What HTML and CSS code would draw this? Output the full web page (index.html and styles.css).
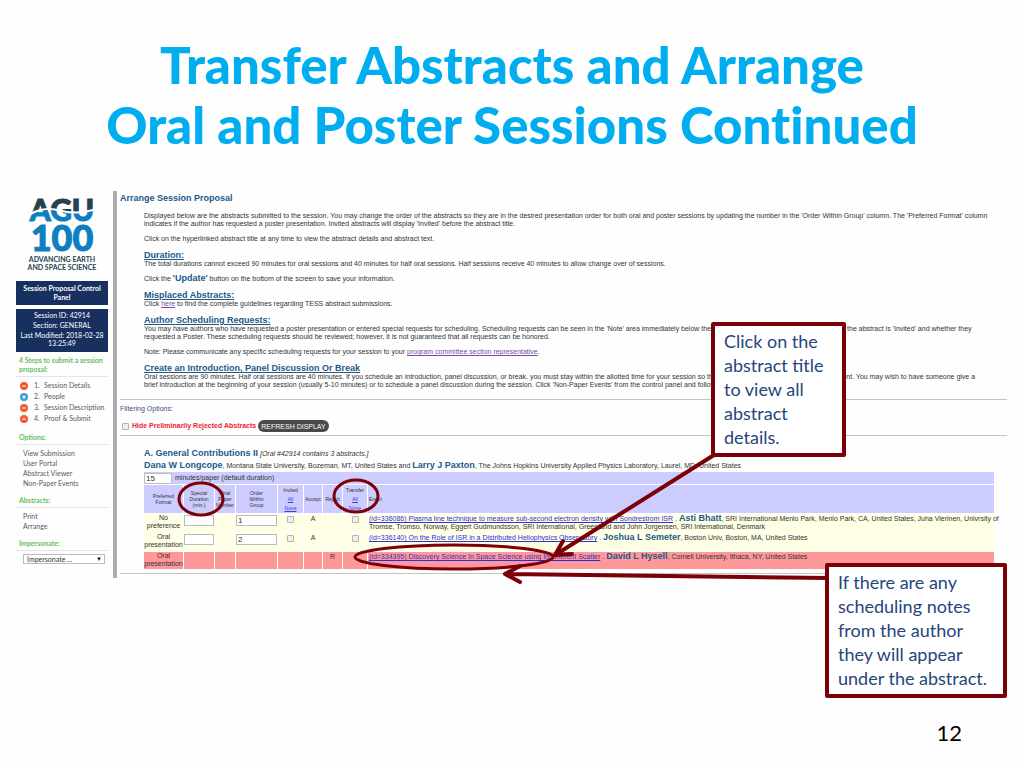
FILE: index.html
```html
<!DOCTYPE html>
<html lang="en">
<head>
    <meta charset="UTF-8" />
    <title>Transfer Abstracts and Arrange Oral and Poster Sessions</title>
    <meta name="viewport" content="width=device-width, initial-scale=1" />
    <link rel="stylesheet" href="styles.css">
</head>
<body>
    <h1>Transfer Abstracts and Arrange<br />Oral and Poster Sessions Continued</h1>

    <div class="app">
        <aside class="sidebar">
            <svg class="logo" viewBox="0 0 92 82" role="img" aria-label="AGU 100">
                <defs>
                    <linearGradient id="agu" gradientUnits="userSpaceOnUse" x1="0" y1="8" x2="0" y2="30">
                        <stop offset="0.55" stop-color="#24424e" />
                        <stop offset="0.55" stop-color="#0d7fc0" />
                    </linearGradient>
                </defs>
                <text class="logo-agu" x="46" y="30" fill="url(#agu)" stroke="url(#agu)">AGU</text>
                <path d="M13 24C24 17 34 17 46 20S68 22 80 18" fill="none" stroke="#fff" stroke-width="2" />
                <text class="logo-100" x="46" y="60">100</text>
                <text class="logo-tag" x="46" y="71">ADVANCING EARTH</text>
                <text class="logo-tag" x="46" y="79">AND SPACE SCIENCE</text>
            </svg>
            <div class="box title">Session Proposal Control Panel</div>
            <div class="box info">
                <div>Session ID: 42914</div>
                <div>Section: GENERAL</div>
                <div class="modified">Last Modified: 2018-02-28 13:25:49</div>
            </div>

            <h3>4 Steps to submit a session proposal:</h3>
            <ol class="steps">
                <li><svg viewBox="0 0 8 8"><circle cx="4" cy="4" r="4" fill="#f0592f" /><path d="M2 4h4" stroke="#fff" /></svg><span>1.</span><a href="#">Session Details</a></li>
                <li><svg viewBox="0 0 8 8"><circle cx="4" cy="4" r="4" fill="#3a9bcb" /><path d="M2 4h4M4 2v4" stroke="#fff" /></svg><span>2.</span><a href="#">People</a></li>
                <li><svg viewBox="0 0 8 8"><circle cx="4" cy="4" r="4" fill="#f0592f" /><path d="M2 4h4" stroke="#fff" /></svg><span>3.</span><a href="#">Session Description</a></li>
                <li><svg viewBox="0 0 8 8"><circle cx="4" cy="4" r="4" fill="#f0592f" /><path d="M2 4h4" stroke="#fff" /></svg><span>4.</span><a href="#">Proof &amp; Submit</a></li>
            </ol>

            <h3>Options:</h3>
            <ul class="links">
                <li><a href="#">View Submission</a></li>
                <li><a href="#">User Portal</a></li>
                <li><a href="#">Abstract Viewer</a></li>
                <li><a href="#">Non-Paper Events</a></li>
            </ul>

            <h3>Abstracts:</h3>
            <ul class="links">
                <li><a href="#">Print</a></li>
                <li><a href="#">Arrange</a></li>
            </ul>

            <h3><label for="impersonate">Impersonate:</label></h3>
            <div class="select">
                <select id="impersonate"><option>Impersonate ...</option></select>
            </div>
        </aside>

        <main>
            <h2>Arrange Session Proposal</h2>
            <div class="intro">
                <p>Displayed below are the abstracts submitted to the session. You may change the order of the abstracts so they are in the desired presentation order for both oral and poster sessions by updating the number in the 'Order Within Group' column. The 'Preferred Format' column<br />indicates if the author has requested a poster presentation. Invited abstracts will display 'Invited' before the abstract title.</p>
                <p>Click on the hyperlinked abstract title at any time to view the abstract details and abstract text.</p>
                <h4>Duration:</h4>
                <p>The total durations cannot exceed 90 minutes for oral sessions and 40 minutes for half oral sessions. Half sessions receive 40 minutes to allow change over of sessions.</p>
                <p>Click the <b>'Update'</b> button on the bottom of the screen to save your information.</p>
                <h4>Misplaced Abstracts:</h4>
                <p>Click <a href="#">here</a> to find the complete guidelines regarding TESS abstract submissions.</p>
                <h4>Author Scheduling Requests:</h4>
                <p>You may have authors who have requested a poster presentation or entered special requests for scheduling. Scheduling requests can be seen in the 'Note' area immediately below the author list. The area will show you whether the abstract is 'Invited' and whether they<br />requested a Poster. These scheduling requests should be reviewed; however, it is not guaranteed that all requests can be honored.</p>
                <p>Note: Please communicate any specific scheduling requests for your session to your <a href="#">program committee section representative</a>.</p>
                <h4>Create an Introduction, Panel Discussion Or Break</h4>
                <p>Oral sessions are 90 minutes. Half oral sessions are 40 minutes. If you schedule an introduction, panel discussion, or break, you must stay within the allotted time for your session so that your invited speakers have time to present. You may wish to have someone give a<br />brief introduction at the beginning of your session (usually 5-10 minutes) or to schedule a panel discussion during the session. Click 'Non-Paper Events' from the control panel and follow the steps.</p>
            </div>

            <div class="filter">
                <div class="filter-title">Filtering Options:</div>
                <div class="filter-row">
                    <input type="checkbox" id="hide" />
                    <label for="hide">Hide Preliminarily Rejected Abstracts</label>
                    <button type="button">REFRESH DISPLAY</button>
                </div>
            </div>

            <section class="session">
                <div class="session-name"><b>A. General Contributions II</b> <i>[Oral #42914 contains 3 abstracts.]</i></div>
                <div class="session-chairs"><b>Dana W Longcope</b>, Montana State University, Bozeman, MT, United States and <b>Larry J Paxton</b>, The Johns Hopkins University Applied Physics Laboratory, Laurel, MD, United States</div>
                <div class="minutes">
                    <input type="text" id="minutes" value="15" />
                    <label for="minutes">minutes/paper (default duration)</label>
                </div>
                <table>
                    <colgroup>
                        <col class="c-format"><col class="c-duration"><col class="c-number"><col class="c-order"><col class="c-invited"><col class="c-accept"><col class="c-reject"><col class="c-transfer"><col>
                    </colgroup>
                    <thead>
                        <tr>
                            <th>Preferred<br />Format</th>
                            <th>Special<br />Duration<br />(min.)</th>
                            <th>Final Paper Number</th>
                            <th>Order<br />Within<br />Group</th>
                            <th class="pick">Invited<a href="#">All</a><a href="#">None</a></th>
                            <th>Accept</th>
                            <th>Reject</th>
                            <th class="pick">Transfer<a href="#">All</a><a href="#">None</a></th>
                            <th class="event">Event</th>
                        </tr>
                    </thead>
                    <tbody>
                        <tr>
                            <td>No preference</td>
                            <td><input type="text" aria-label="Special duration" /></td>
                            <td></td>
                            <td><input type="text" value="1" aria-label="Order" /></td>
                            <td><input type="checkbox" aria-label="Invited" /></td>
                            <td>A</td>
                            <td></td>
                            <td><input type="checkbox" aria-label="Transfer" /></td>
                            <td class="event"><a href="#">(id=336086) Plasma line technique to measure sub-second electron density with Sondrestrom ISR</a> . <b>Asti Bhatt</b>, SRI International Menlo Park, Menlo Park, CA, United States, Juha Vierinen, Univrsity of<br />Tromse, Tromso, Norway, Eggert Gudmundsson, SRI International, Greenland and John Jorgensen, SRI International, Denmark</td>
                        </tr>
                        <tr>
                            <td>Oral presentation</td>
                            <td><input type="text" aria-label="Special duration" /></td>
                            <td></td>
                            <td><input type="text" value="2" aria-label="Order" /></td>
                            <td><input type="checkbox" aria-label="Invited" /></td>
                            <td>A</td>
                            <td></td>
                            <td><input type="checkbox" aria-label="Transfer" /></td>
                            <td class="event"><a href="#">(id=336140) On the Role of ISR in a Distributed Heliophysics Observatory</a> . <b>Joshua L Semeter</b>, Boston Univ, Boston, MA, United States</td>
                        </tr>
                        <tr class="rejected">
                            <td>Oral presentation</td>
                            <td></td>
                            <td></td>
                            <td></td>
                            <td></td>
                            <td></td>
                            <td>R</td>
                            <td></td>
                            <td class="event"><a href="#">(id=334395) Discovery Science In Space Science using Incoherent Scatter</a> . <b>David L Hysell</b>, Cornell University, Ithaca, NY, United States</td>
                        </tr>
                    </tbody>
                </table>
            </section>
        </main>
    </div>

    <!-- circles and arrows on top of the screen -->
    <svg class="marks" width="1024" height="768" viewBox="0 0 1024 768">
        <ellipse cx="201" cy="499" rx="22" ry="16" />
        <ellipse cx="356" cy="496" rx="22" ry="16" />
        <ellipse cx="454" cy="557" rx="99" ry="12" />
        <path class="arrow" d="M714 455L555 555M563 541L555 555L572 554" />
        <path class="arrow" d="M828 578L505 574M520 566L505 574L520 582" />
    </svg>
    <div class="callout title-note">Click on the abstract title to view all abstract details.</div>
    <div class="callout schedule-note">If there are any scheduling notes from the author they will appear under the abstract.</div>

    <div class="page-number">12</div>
</body>
</html>
```
FILE: styles.css
```css
* {
    box-sizing: border-box;
}
body {
    margin: 0;
    position: relative;
    min-height: 100vh;
    background: #fefefe;
    color: #333;
    font-family: "Liberation Sans", Arial, sans-serif;
    font-size: 7px;
    line-height: 8px;
}
h1 {
    margin: 0;
    padding: 35px 0 36px;
    text-align: center;
    font-family: Lato, sans-serif;
    font-size: 51px;
    line-height: 60px;
    font-weight: 900;
    font-variant-ligatures: none;
    color: #00aeef;
}
h2, h3, h4, p, ul, ol {
    margin: 0;
    padding: 0;
}
ul, ol {
    list-style: none;
}
b, h2, h4 {
    color: #22598a;
}
/* bigger names must not push their line apart */
b {
    font-size: 9px;
    line-height: 1px;
}
.app {
    display: flex;
    padding: 0 17px 0 16px;
}

/* left column */
.sidebar {
    width: 101px;
    flex-shrink: 0;
    padding-right: 5px;
    height: 387px;
    border-right: 4px solid #adadad;
    font-family: Lato, sans-serif;
    color: #555a66;
}
.sidebar a {
    color: inherit;
    text-decoration: none;
}
.logo {
    display: block;
    width: 92px;
    height: 82px;
    margin-bottom: 8px;
}
.logo text {
    text-anchor: middle;
    font-weight: 900;
}
.logo-agu {
    font-size: 30px;
}
.logo-100 {
    font-size: 36px;
    fill: #0d7fc0;
    stroke: #0d7fc0;
}
.logo .logo-tag {
    font-size: 7px;
    font-weight: 700;
    fill: #24424e;
}
.box {
    background: #17305f;
    color: #fff;
    text-align: center;
}
.box.title {
    padding: 3px 2px;
    font-weight: bold;
    line-height: 9px;
    margin-bottom: 4px;
}
.box.info {
    padding: 1px 4px 4px;
    line-height: 10px;
    margin-bottom: 4px;
}
.box .modified {
    line-height: 8px;
    padding: 1px 0;
}
.sidebar h3 {
    margin-bottom: 3px;
    padding: 0 0 2px 3px;
    border-bottom: 1px solid #e4e4e4;
    font-size: 7px;
    line-height: 9px;
    color: #67bd5c;
}
.steps {
    margin-bottom: 9px;
}
.steps li {
    display: flex;
    align-items: center;
    line-height: 11px;
    padding-left: 4px;
}
.steps svg {
    width: 8px;
    height: 8px;
}
.steps span {
    width: 10px;
    margin-left: 6px;
}
.links {
    padding-left: 7px;
    line-height: 10px;
    margin-bottom: 8px;
}
.select {
    position: relative;
    margin: 0 3px 0 7px;
}
.select::after {
    content: "▼";
    position: absolute;
    right: 3px;
    top: 1px;
    font-size: 6px;
    color: #111;
    pointer-events: none;
}
select {
    display: block;
    appearance: none;
    width: 100%;
    height: 10px;
    padding: 0 3px;
    border: 1px solid #bbb;
    background: #fff;
    color: #333;
    font: 7px Lato, sans-serif;
}

/* main column */
main {
    flex: 1;
    min-width: 0;
    padding-left: 3px;
    white-space: nowrap;
}
h2 {
    padding: 2px 0 9px;
    font-size: 9px;
    line-height: 10px;
}
.intro, .session {
    padding-left: 24px;
}
.intro p {
    margin-bottom: 7px;
}
.intro a {
    color: #7a4aa5;
}
h4 {
    font-size: 9px;
    line-height: 10px;
    text-decoration: underline;
}
.filter {
    margin-top: 10px;
    padding: 4px 0 3px;
    border: solid #c4c4c4;
    border-width: 1px 0;
}
.filter-title {
    color: #3d4a8a;
    line-height: 10px;
}
.filter-row {
    display: flex;
    align-items: center;
    margin-top: 6px;
    height: 12px;
}
.filter-row label {
    margin: 0 2px 0 3px;
    color: #ee2233;
    font-weight: bold;
}
button {
    height: 12px;
    padding: 0 3px;
    border: 0;
    border-radius: 6px;
    background: #4a4a4a;
    color: #fff;
    font: 7px "Liberation Sans", Arial, sans-serif;
}
input[type="checkbox"] {
    appearance: none;
    display: block;
    width: 7px;
    height: 7px;
    margin: 0 auto;
    border: 1px solid #b5b5b5;
    border-radius: 1px;
    background: #eee;
}
.filter-row input[type="checkbox"] {
    margin: 0 0 0 2px;
}
input[type="text"] {
    display: block;
    width: 100%;
    height: 11px;
    padding: 0 1px;
    border: 1px solid #bbb;
    background: #fff;
    color: #333;
    font: 8px "Liberation Sans", Arial, sans-serif;
}
.session {
    padding-top: 12px;
    padding-bottom: 3px;
    border-bottom: 1px solid #c4c4c4;
}
.session-name, .session-chairs {
    line-height: 12px;
}
.minutes {
    display: flex;
    align-items: center;
    gap: 3px;
    height: 12px;
    margin-right: 13px;
    background: #ccccff;
}
.minutes input[type="text"] {
    width: 28px;
}
table {
    table-layout: fixed;
    width: calc(100% - 11px);
    margin-left: -1px;
    border-spacing: 1px;
    white-space: normal;
}
.c-format { width: 39px; }
.c-duration { width: 30px; }
.c-number { width: 20px; }
.c-order { width: 41px; }
.c-invited { width: 25px; }
.c-accept { width: 18px; }
.c-reject { width: 19px; }
.c-transfer { width: 24px; }
th {
    height: 28px;
    padding: 0;
    background: #ccccff;
    font-size: 5px;
    line-height: 6px;
    font-weight: normal;
}
.pick a {
    display: block;
    margin-top: 3px;
    color: #3a3adf;
}
td {
    height: 18px;
    padding: 1px 0 0;
    background: #ffffe6;
    text-align: center;
    vertical-align: top;
}
td:first-child {
    padding: 0;
}
td input[type="checkbox"] {
    margin-top: 1px;
}
.event {
    padding-left: 1px;
    text-align: left;
    white-space: nowrap;
}
.event a {
    color: #2f2fd6;
}
.rejected td {
    height: 17px;
    background: #ff9999;
}

/* notes drawn over the screen */
.marks {
    position: absolute;
    left: 0;
    top: 0;
    fill: none;
    stroke: #7b0008;
    stroke-width: 3;
}
.arrow {
    stroke-width: 4;
    stroke-linecap: round;
    stroke-linejoin: round;
}
.callout {
    position: absolute;
    padding: 3px 8px 4px 9px;
    border: 4px solid #7b0008;
    border-radius: 2px;
    background: #fff;
    color: #27457c;
    font-family: Lato, sans-serif;
    font-size: 18px;
    line-height: 24px;
}
.title-note {
    left: 711px;
    top: 322px;
    width: 135px;
}
.schedule-note {
    left: 825px;
    top: 563px;
    width: 182px;
}
.page-number {
    position: absolute;
    right: 62px;
    bottom: 20px;
    color: #000;
    font-family: Lato, sans-serif;
    font-size: 22px;
    line-height: 30px;
}
```
